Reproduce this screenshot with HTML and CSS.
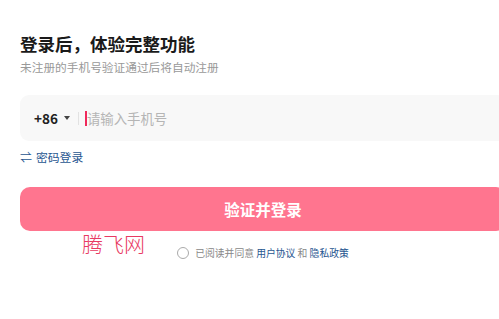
FILE: index.html
```html
<!DOCTYPE html>
<html lang="zh">
<head>
<meta charset="utf-8">
<link rel="stylesheet" href="styles.css">
</head>
<body>
<div class="page">
  <h1 class="title">登录后，体验完整功能</h1>
  <p class="subtitle">未注册的手机号验证通过后将自动注册</p>
  <div class="phone">
    <span class="code">+86</span>
    <span class="arrow"></span>
    <span class="sep"></span>
    <span class="caret"></span>
    <span class="placeholder">请输入手机号</span>
  </div>
  <a class="switch"><span class="swap">⇌</span>密码登录</a>
  <button class="submit">验证并登录</button>
  <div class="agree">
    <span class="radio"></span>
    <span>已阅读并同意 <a class="link">用户协议</a> 和 <a class="link">隐私政策</a></span>
  </div>
  <div class="watermark">腾飞网</div>
</div>
</body>
</html>
```
FILE: styles.css
```css
html, body { margin: 0; padding: 0; overflow: hidden; background: #fff; }
body { font-family: "Noto Sans CJK SC", "Noto Sans", sans-serif; }
.page { position: relative; width: 486px; padding: 33px 20px 0 20px; }
.title { margin: 0; font-size: 17.5px; font-weight: 700; color: #1a1a1a; line-height: 22px; }
.subtitle { margin: 4px 0 0; font-size: 11.7px; color: #999; line-height: 16px; }
.phone { margin-top: 20px; height: 46px; background: #f8f8f8; border-radius: 9px; display: flex; align-items: center; padding-left: 14px; }
.code { font-size: 13.5px; font-weight: 700; color: #222; }
.arrow { width: 0; height: 0; border-left: 3px solid transparent; border-right: 3px solid transparent; border-top: 4px solid #444; margin-left: 6px; }
.sep { width: 1px; height: 13px; background: #e2e2e2; margin-left: 8px; }
.caret { width: 2px; height: 15px; background: #f0295a; margin-left: 6px; }
.placeholder { font-size: 13.4px; color: #b5b5b5; }
.switch { display: flex; align-items: center; margin-top: 8px; font-size: 11.8px; color: #275690; line-height: 16px; }
.swap { font-size: 12px; margin-right: 4px; }
.submit { display: block; margin-top: 22px; width: 100%; height: 44px; border: 0; border-radius: 10px; background: #ff758f; color: #fff; font-family: inherit; font-size: 15.5px; font-weight: 700; }
.agree { margin-top: 15px; display: flex; justify-content: center; align-items: center; gap: 6px; font-size: 9.8px; color: #888; }
.radio { width: 10px; height: 10px; border: 1px solid #aaa; border-radius: 50%; }
.link { color: #275690; }
.watermark { position: absolute; left: 82px; top: 228px; font-size: 21px; font-weight: 300; color: #e83a62; font-family: "Noto Sans CJK SC", sans-serif; }
```
